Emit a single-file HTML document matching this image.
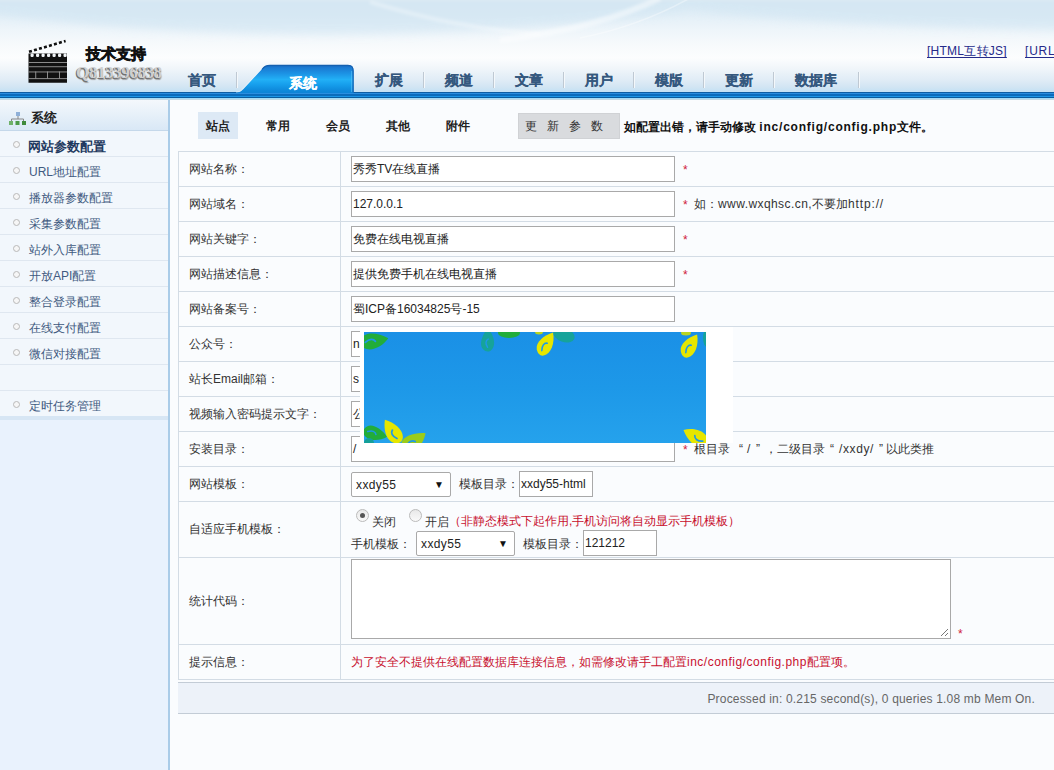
<!DOCTYPE html>
<html><head><meta charset="utf-8">
<style>
*{box-sizing:border-box;margin:0;padding:0}
html,body{width:1054px;height:770px;overflow:hidden;background:#fafcfe;font-family:"Liberation Sans",sans-serif;font-size:12px;color:#333}
.abs{position:absolute}
#hdr{position:absolute;left:0;top:0;width:1054px;height:92px;background:linear-gradient(180deg,#edf3f6 0px,#dfedf6 3px,#e3eff7 15px,#eef5fa 30px,#f7fafc 45px,#fcfdfe 58px,#f1f6fa 68px,#e0ecf6 80px,#d2e5f3 87px,#c6e2f4 91px,#c6e2f4 92px)}
#bar{position:absolute;left:0;top:92px;width:1054px;height:8px;background:linear-gradient(180deg,#0e5ea3 0,#0e5ea3 1px,#2a8ee0 1px,#2a8ee0 2px,#0b6cbc 2px,#0b6cbc 4px,#1c96e6 4px,#1c96e6 5px,#0a5c9e 5px,#0a5c9e 6px,#a6dcf6 6px,#a6dcf6 7px,#c3d9e3 7px,#c3d9e3 8px)}
.nav{position:absolute;top:72px;font-size:14px;font-weight:bold;color:#35587e;line-height:16px;-webkit-text-stroke:0.2px #35587e}
.sep{position:absolute;top:72px;width:2px;height:16px;background:#bfc9d3;border-right:1px solid #f4f8fb}
#side{position:absolute;left:0;top:100px;width:168px;height:670px;background:#e9f2fd}
#sideb{position:absolute;left:168px;top:100px;width:2px;height:670px;background:#aacce8}
#sh{position:absolute;left:0;top:100px;width:168px;height:31px;background:linear-gradient(180deg,#f4f8fc,#d9e8f6);border-bottom:1px solid #c5d8ea}
.si{position:absolute;left:0;width:168px;height:26px;border-bottom:1px solid #dfe7f0;background:#f2f7fc}
.si b{position:absolute;left:13px;top:10px;width:7px;height:7px;border:1px solid #b9b9b9;border-radius:50%;background:#f6f6f6}
.si span{position:absolute;left:29px;top:8px;font-size:12px;line-height:14px;color:#3f5a80}
.si span.cur{font-size:13px;top:9px;left:28px;font-weight:bold;color:#1f3a60}
#main{position:absolute;left:170px;top:100px;width:884px;height:670px;background:#fafcfe}
.tab{position:absolute;top:112px;width:40px;height:27px;line-height:29px;text-align:center;font-weight:bold;color:#222}
table{position:absolute;left:178px;top:151px;border-collapse:collapse;width:900px}
td{border:1px solid #d6e0ea;vertical-align:middle}
td.l{width:162px;padding-left:11px;color:#333}
.inp{display:inline-block;vertical-align:middle;height:26px;border:1px solid #a9a9a9;background:#fff;line-height:25px;padding-left:1px;font-size:12px;color:#222;overflow:hidden;white-space:nowrap}
.red{color:#d11}
.sel{position:absolute;height:25px;border:1px solid #a9a9a9;border-radius:2px;background:#fff;line-height:25px;padding-left:4px;color:#222;font-size:12px;letter-spacing:0.4px}
.sel i{position:absolute;right:6px;top:-1px;font-style:normal;font-size:10px;color:#111;letter-spacing:0}
.radio{position:absolute;width:13px;height:13px;border-radius:50%;border:1px solid #bbb;background:linear-gradient(#e8e8e8,#fafafa)}
.radio.on:after{content:"";position:absolute;left:3px;top:3px;width:5px;height:5px;border-radius:50%;background:#555}
.ta{position:absolute;border:1px solid #a9a9a9;background:#fff}
.hl{position:absolute;left:178px;width:876px;height:1px;background:#d3dce5}
.vl{position:absolute;top:151px;width:1px;height:529px;background:#d3dce5}
.lbl{position:absolute;left:189px;color:#333;font-size:12px}
.inp{position:absolute}
.star{position:absolute;left:683px;color:#d0203a;font-size:12px;line-height:12px}
.note{position:absolute;color:#333;font-size:12px;line-height:14px}
</style></head><body>
<div id="hdr"></div>
<svg class="abs" style="left:0;top:0" width="1054" height="92">
 <defs><filter id="bl" x="-10%" y="-50%" width="120%" height="200%"><feGaussianBlur stdDeviation="4"/></filter><filter id="bl2"><feGaussianBlur stdDeviation="1.5"/></filter></defs>
 <path d="M-50 8 C 150 40, 450 45, 690 10 C 800 22, 950 30, 1100 30 L1100 -20 L-50 -20 Z" fill="#cfe4f2" filter="url(#bl)" opacity="0.6"/>
 <path d="M370 2 C 430 20, 480 30, 540 34" fill="none" stroke="#ffffff" stroke-opacity="0.3" stroke-width="4" filter="url(#bl2)"/>
 <path d="M500 40 C 570 32, 620 18, 660 -2" fill="none" stroke="#ffffff" stroke-opacity="0.45" stroke-width="6" filter="url(#bl2)"/>
 <path d="M580 38 C 630 28, 665 12, 690 -2" fill="none" stroke="#ffffff" stroke-opacity="0.35" stroke-width="1.5"/>
</svg>
<div id="bar"></div>

<!-- nav -->
<div class="nav" style="left:188px">首页</div>
<div class="sep" style="left:236px"></div>
<svg class="abs" style="left:236px;top:64px" width="120" height="29" viewBox="0 0 120 29">
 <defs><linearGradient id="tg" x1="0" y1="0" x2="0" y2="1"><stop offset="0" stop-color="#1462b6"/><stop offset="0.08" stop-color="#1a78d0"/><stop offset="0.3" stop-color="#1c92e4"/><stop offset="0.52" stop-color="#22b0f6"/><stop offset="0.7" stop-color="#169eec"/><stop offset="0.92" stop-color="#0e88da"/><stop offset="1" stop-color="#0e84d6"/></linearGradient></defs>
 <path d="M0 28.5 L1 28.5 C3 28.5 5 27.5 7 25.5 L26 5 C28 2 30 1 34 1 L112 1 C116 1 117.6 3 117.6 7 L117.6 29 L0 29 Z" fill="url(#tg)"/>
 <path d="M0 28 C3 28 5 27 6.6 25.1 L25.6 4.6 C27.6 1.6 30 0.5 34 0.5 L112 0.5" fill="none" stroke="#eef6fc" stroke-width="0.8" opacity="0.8"/>
 <path d="M26 5.5 C28 2.5 30 1.3 34 1.3 L112 1.3 C116 1.3 117.1 3 117.1 7 L117.1 28.5" fill="none" stroke="#1460b0" stroke-width="1.2"/><path d="M115.6 7 L115.6 28" stroke="#5cc4f8" stroke-width="1" opacity="0.6"/>
</svg>
<div class="nav" style="left:289px;top:75px;color:#fff;-webkit-text-stroke:0.2px #fff">系统</div>
<div class="nav" style="left:375px">扩展</div><div class="sep" style="left:423px"></div>
<div class="nav" style="left:445px">频道</div><div class="sep" style="left:493px"></div>
<div class="nav" style="left:515px">文章</div><div class="sep" style="left:563px"></div>
<div class="nav" style="left:585px">用户</div><div class="sep" style="left:633px"></div>
<div class="nav" style="left:655px">模版</div><div class="sep" style="left:703px"></div>
<div class="nav" style="left:725px">更新</div><div class="sep" style="left:773px"></div>
<div class="nav" style="left:795px">数据库</div><div class="sep" style="left:858px"></div>

<div class="abs" style="left:927px;top:43px;color:#252a8a;text-decoration:underline;text-underline-offset:1.5px;font-size:12px;letter-spacing:0.25px">[HTML互转JS]</div>
<div class="abs" style="left:1025px;top:43px;color:#252a8a;text-decoration:underline;text-underline-offset:1.5px;font-size:12px;white-space:nowrap;letter-spacing:0.8px">[URL互转</div>

<!-- logo -->
<svg class="abs" style="left:24px;top:38px" width="50" height="50" viewBox="0 0 50 50">
 <g stroke="#111" stroke-width="2.6" stroke-dasharray="3 2.2" fill="none"><path d="M5 13.8 L41.6 3"/></g>
 <path d="M4.5 15.6 H43 V44.8 H4.5 Z" fill="#111"/>
 <g fill="#f2f5f8">
  <rect x="6.5" y="15.6" width="3.2" height="3.4" rx="1.2"/><rect x="12" y="15.6" width="3.2" height="3.4" rx="1.2"/><rect x="17.5" y="15.6" width="3.2" height="3.4" rx="1.2"/><rect x="23" y="15.6" width="3.2" height="3.4" rx="1.2"/><rect x="28.5" y="15.6" width="3.2" height="3.4" rx="1.2"/><rect x="34" y="15.6" width="3.2" height="3.4" rx="1.2"/><rect x="39.5" y="15.6" width="3.2" height="3.4" rx="1.2"/>
 </g>
 <g fill="#9a9a9a">
  <rect x="4.5" y="24" width="38.5" height="0.9"/><rect x="4.5" y="28.3" width="38.5" height="0.9"/><rect x="4.5" y="33.5" width="38.5" height="0.9"/><rect x="4.5" y="40.2" width="38.5" height="0.9"/>
  <rect x="11.3" y="33.5" width="0.9" height="7"/><rect x="23.1" y="33.5" width="0.9" height="7"/><rect x="35" y="33.5" width="0.9" height="7"/>
 </g>
</svg>
<div class="abs" style="left:86px;top:45px;font-size:15px;font-weight:bold;color:#111;line-height:17px;-webkit-text-stroke:0.7px #111">技术支持</div>
<div class="abs" style="left:76px;top:63px;font-size:17px;letter-spacing:-0.4px;color:#cfcfcf;font-family:'Liberation Serif',serif;font-weight:bold;line-height:19px;text-shadow:-1px 1px 0 #707070,0 2px 1px #9a9a9a">Q813396838</div>
<!-- sidebar -->
<div id="side"></div>
<div id="sh"></div>
<svg class="abs" style="left:9px;top:112px" width="17" height="14" viewBox="0 0 17 14">
 <rect x="7" y="0" width="4" height="4" fill="#8fb0d8"/>
 <path d="M9 4 V7 M2.5 9 V7 H14.5 V9" stroke="#888" fill="none"/>
 <rect x="0" y="9" width="4" height="4" fill="#6fb16a"/><rect x="6.5" y="9" width="4" height="4" fill="#4c9a48"/><rect x="13" y="9" width="4" height="4" fill="#3f8a3c"/>
</svg>
<div class="abs" style="left:31px;top:109px;font-size:13px;font-weight:bold;color:#222">系统</div>
<div class="si" style="top:131px"><b></b><span class="cur">网站参数配置</span></div>
<div class="si" style="top:157px"><b></b><span>URL地址配置</span></div>
<div class="si" style="top:183px"><b></b><span>播放器参数配置</span></div>
<div class="si" style="top:209px"><b></b><span>采集参数配置</span></div>
<div class="si" style="top:235px"><b></b><span>站外入库配置</span></div>
<div class="si" style="top:261px"><b></b><span>开放API配置</span></div>
<div class="si" style="top:287px"><b></b><span>整合登录配置</span></div>
<div class="si" style="top:313px"><b></b><span>在线支付配置</span></div>
<div class="si" style="top:339px"><b></b><span>微信对接配置</span></div>
<div class="si" style="top:365px"></div>
<div class="si" style="top:391px"><b></b><span>定时任务管理</span></div>
<div class="abs" style="left:0;top:416px;width:168px;height:4px;background:#d7e6f4"></div>
<div id="sideb"></div>

<!-- subtabs -->
<div class="tab" style="left:198px;background:#dde9f5">站点</div>
<div class="tab" style="left:258px">常用</div>
<div class="tab" style="left:318px">会员</div>
<div class="tab" style="left:378px">其他</div>
<div class="tab" style="left:438px">附件</div>
<div class="abs" style="left:518px;top:113px;width:102px;height:26px;background:#d9dbde;border:1px solid #d0d2d5;color:#333;line-height:24px;padding-left:6px;letter-spacing:10px">更新参数</div>
<div class="abs" style="left:624px;top:119px;font-weight:bold;color:#111;font-size:12px">如配置出错，请手动修改 <span style="letter-spacing:0.78px">inc/config/config.php</span>文件。</div>

<!-- table -->
<div class="hl" style="top:151px"></div>
<div class="hl" style="top:186px"></div>
<div class="hl" style="top:221px"></div>
<div class="hl" style="top:256px"></div>
<div class="hl" style="top:291px"></div>
<div class="hl" style="top:326px"></div>
<div class="hl" style="top:361px"></div>
<div class="hl" style="top:396px"></div>
<div class="hl" style="top:431px"></div>
<div class="hl" style="top:466px"></div>
<div class="hl" style="top:501px"></div>
<div class="hl" style="top:557px"></div>
<div class="hl" style="top:644px"></div>
<div class="hl" style="top:679px"></div>
<div class="vl" style="left:178px"></div><div class="vl" style="left:340px"></div>
<div class="lbl" style="top:152px;height:34px;line-height:34px">网站名称：</div>
<div class="lbl" style="top:187px;height:34px;line-height:34px">网站域名：</div>
<div class="lbl" style="top:222px;height:34px;line-height:34px">网站关键字：</div>
<div class="lbl" style="top:257px;height:34px;line-height:34px">网站描述信息：</div>
<div class="lbl" style="top:292px;height:34px;line-height:34px">网站备案号：</div>
<div class="lbl" style="top:327px;height:34px;line-height:34px">公众号：</div>
<div class="lbl" style="top:362px;height:34px;line-height:34px">站长Email邮箱：</div>
<div class="lbl" style="top:397px;height:34px;line-height:34px">视频输入密码提示文字：</div>
<div class="lbl" style="top:432px;height:34px;line-height:34px">安装目录：</div>
<div class="lbl" style="top:467px;height:34px;line-height:34px">网站模板：</div>
<div class="lbl" style="top:502px;height:55px;line-height:55px">自适应手机模板：</div>
<div class="lbl" style="top:558px;height:86px;line-height:86px">统计代码：</div>
<div class="lbl" style="top:645px;height:34px;line-height:34px">提示信息：</div>
<div class="inp" style="left:351px;top:156px;width:324px">秀秀TV在线直播</div>
<div class="inp" style="left:351px;top:191px;width:324px">127.0.0.1</div>
<div class="inp" style="left:351px;top:226px;width:324px">免费在线电视直播</div>
<div class="inp" style="left:351px;top:261px;width:324px">提供免费手机在线电视直播</div>
<div class="inp" style="left:351px;top:296px;width:324px">蜀ICP备16034825号-15</div>
<div class="inp" style="left:351px;top:331px;width:324px">n</div>
<div class="inp" style="left:351px;top:366px;width:324px">s</div>
<div class="inp" style="left:351px;top:401px;width:324px">公</div>
<div class="inp" style="left:351px;top:436px;width:324px">/</div>
<div class="star" style="top:164px">*</div>
<div class="star" style="top:199px">*</div>
<div class="star" style="top:234px">*</div>
<div class="star" style="top:269px">*</div>
<div class="star" style="top:444px">*</div>
<div class="note" style="left:694px;top:197px">如：<span style="letter-spacing:0.43px">www.wxqhsc.cn,</span>不要加<span style="letter-spacing:0.85px">http://</span></div>
<div class="note" style="left:694px;top:442px">根目录</div><div class="note" style="left:739px;top:442px">“</div><div class="note" style="left:747px;top:442px">/</div><div class="note" style="left:756px;top:442px">”</div><div class="note" style="left:765px;top:442px">，二级目录</div><div class="note" style="left:830px;top:442px">“</div><div class="note" style="left:839px;top:442px;letter-spacing:0.6px">/xxdy/</div><div class="note" style="left:879px;top:442px">”</div><div class="note" style="left:886px;top:442px">以此类推</div>

<!-- template row -->
<div class="sel" style="left:351px;top:472px;width:100px">xxdy55<i>&#9660;</i></div>
<div class="note" style="left:459px;top:477px">模板目录：</div>
<div class="inp" style="left:519px;top:471px;width:74px">xxdy55-html</div>
<!-- mobile row -->
<div class="radio on" style="left:356px;top:509px"></div>
<div class="note" style="left:372px;top:515px">关闭</div>
<div class="radio" style="left:409px;top:509px"></div>
<div class="note" style="left:425px;top:515px">开启</div>
<div class="note" style="left:449px;top:514px;color:#c8102e">（非静态模式下起作用,手机访问将自动显示手机模板）</div>
<div class="note" style="left:351px;top:537px">手机模板：</div>
<div class="sel" style="left:416px;top:531px;width:99px">xxdy55<i>&#9660;</i></div>
<div class="note" style="left:523px;top:537px">模板目录：</div>
<div class="inp" style="left:583px;top:530px;width:74px">121212</div>
<!-- textarea -->
<div class="ta" style="left:351px;top:559px;width:600px;height:80px"></div>
<svg class="abs" style="left:939px;top:627px" width="10" height="10"><path d="M2 9 L9 2 M6 9 L9 6" stroke="#777" stroke-width="1" fill="none"/></svg>
<div class="star" style="left:958px;top:628px">*</div>
<!-- tip -->
<div class="note" style="left:351px;top:655px;color:#c8102e">为了安全不提供在线配置数据库连接信息，如需修改请手工配置<span style="letter-spacing:0.5px">inc/config/config.php</span>配置项。</div>
<!-- footer -->
<div class="abs" style="left:178px;top:682px;width:876px;height:32px;background:#edf2f9;border-top:1px solid #c3ccd6;border-bottom:1px solid #c3ccd6"></div>
<div class="abs" style="left:178px;top:692px;width:857px;text-align:right;color:#666;font-size:12px;line-height:14px"><span style="letter-spacing:0.18px">Processed in: 0.215 second(s), 0 queries 1.08 mb Mem On.</span></div>
<!-- overlay -->
<div class="abs" style="left:360px;top:327px;width:373px;height:116px;background:#fff"></div>
<svg class="abs" style="left:364px;top:332px" width="342" height="111" viewBox="0 0 342 111">
 <defs>
  <linearGradient id="sky" x1="0" y1="0" x2="0" y2="1"><stop offset="0" stop-color="#1a90e6"/><stop offset="0.5" stop-color="#1d98e8"/><stop offset="1" stop-color="#25a2ec"/></linearGradient>
  
 </defs>
 <rect width="342" height="111" fill="url(#sky)"/>
 <!-- top-left green -->
 <g fill="#22ad3a" transform="translate(-2,-2) rotate(35 11 11) scale(1.1)"><path d="M20 0 C20 10 14 20 6 20 C2 20 0 17 0 13 C0 6 10 1 20 0 Z"/><path d="M5 15 C6 10 9 8 12 9" fill="none" stroke="#1d98e8" stroke-width="1.6" stroke-linecap="round"/></g>
 <!-- teal heart -->
 <g fill="#16a39a" transform="translate(115,-1) rotate(-45 10 10) scale(0.9)"><path d="M20 0 C20 10 14 20 6 20 C2 20 0 17 0 13 C0 6 10 1 20 0 Z"/><path d="M5 15 C6 10 9 8 12 9" fill="none" stroke="#1d98e8" stroke-width="1.6" stroke-linecap="round"/></g>
 <ellipse cx="145" cy="1" rx="11" ry="5" fill="#22ad3a"/>
 <ellipse cx="175" cy="0" rx="4" ry="2.5" fill="#b8d420"/>
 <!-- yellow heart -->
 <g fill="#e6e600" transform="translate(172,2) rotate(-10 10 10) scale(0.95,1.05)"><path d="M20 0 C20 10 14 20 6 20 C2 20 0 17 0 13 C0 6 10 1 20 0 Z"/><path d="M5 15 C6 10 9 8 12 9" fill="none" stroke="#1d98e8" stroke-width="1.6" stroke-linecap="round"/></g>
 <ellipse cx="200" cy="3" rx="11" ry="7" fill="#16a39a" transform="rotate(20 200 3)"/>
 <!-- right top -->
 <ellipse cx="322" cy="1" rx="5" ry="2.5" fill="#b8d420"/>
 <g fill="#e6e600" transform="translate(316,4) rotate(-10 10 10) scale(0.95,1.05)"><path d="M20 0 C20 10 14 20 6 20 C2 20 0 17 0 13 C0 6 10 1 20 0 Z"/><path d="M5 15 C6 10 9 8 12 9" fill="none" stroke="#1d98e8" stroke-width="1.6" stroke-linecap="round"/></g>
 <ellipse cx="343" cy="6" rx="4" ry="9" fill="#16a39a"/>
 <!-- bottom-left -->
 <g fill="#22ad3a" transform="translate(0,92) rotate(60 10 10) scale(0.95)"><path d="M20 0 C20 10 14 20 6 20 C2 20 0 17 0 13 C0 6 10 1 20 0 Z"/><path d="M5 15 C6 10 9 8 12 9" fill="none" stroke="#1d98e8" stroke-width="1.6" stroke-linecap="round"/></g>
 <circle cx="5" cy="111" r="5" fill="#15a098"/>
 <g fill="#e6e600" transform="translate(18,90) rotate(-75 10 10) scale(1.0,1.1)"><path d="M20 0 C20 10 14 20 6 20 C2 20 0 17 0 13 C0 6 10 1 20 0 Z"/><path d="M5 15 C6 10 9 8 12 9" fill="none" stroke="#1d98e8" stroke-width="1.6" stroke-linecap="round"/></g>
 <g fill="#9ccc1a" transform="translate(38,99) rotate(10 10 10) scale(1.1)"><path d="M20 0 C20 10 14 20 6 20 C2 20 0 17 0 13 C0 6 10 1 20 0 Z"/><path d="M5 15 C6 10 9 8 12 9" fill="none" stroke="#1d98e8" stroke-width="1.6" stroke-linecap="round"/></g>
 <!-- bottom-right -->
 <g fill="#e6e600" transform="translate(322,96) rotate(255 10 10) scale(1.05)"><path d="M20 0 C20 10 14 20 6 20 C2 20 0 17 0 13 C0 6 10 1 20 0 Z"/><path d="M5 15 C6 10 9 8 12 9" fill="none" stroke="#1d98e8" stroke-width="1.6" stroke-linecap="round"/></g>
</svg>
</body></html>
